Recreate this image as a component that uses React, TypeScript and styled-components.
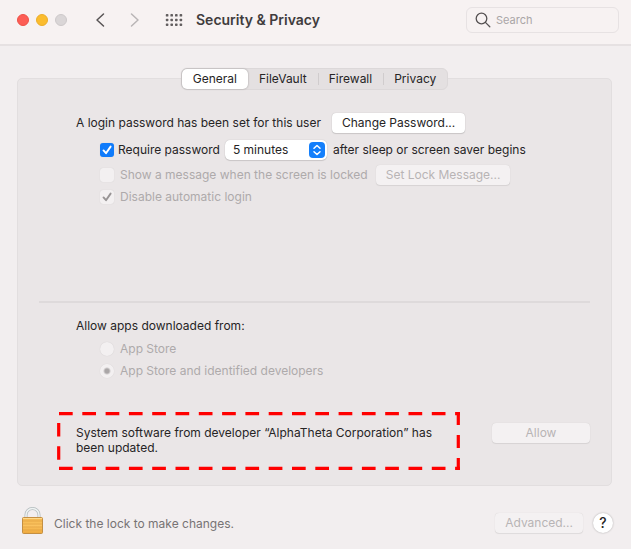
import React from "react";
import styled, { createGlobalStyle, css } from "styled-components";

const GlobalStyle = createGlobalStyle`
  * { box-sizing: border-box; }
  body {
    margin: 0;
    background: #f2eeef;
    color: #262425;
    font: 12px/16px Inter, "Liberation Sans", sans-serif;
  }
  button, input, select { font: inherit; color: inherit; margin: 0; }
`;

const Window = styled.div`
  display: flex;
  flex-direction: column;
  min-height: 100vh;
`;

const Toolbar = styled.header`
  display: flex;
  align-items: center;
  height: 46px;
  padding: 0 12px 4px 17px;
  background: #f7f2f2;
  border-bottom: 2px solid #e6e1e2;
`;

const Lights = styled.div`
  display: flex;
  gap: 7px;
`;

const Light = styled.button<{ $color: string; $edge: string }>`
  width: 12px;
  height: 12px;
  padding: 0;
  border: 1px solid ${(p) => p.$edge};
  border-radius: 50%;
  background: ${(p) => p.$color};
`;

const IconButton = styled.button<{ $gap: number }>`
  display: flex;
  margin-left: ${(p) => p.$gap}px;
  padding: 0;
  border: 0;
  background: none;
`;

const Title = styled.h1`
  flex: 1;
  margin: 0 0 0 13px;
  font-size: 14px;
  line-height: 16px;
  font-weight: 600;
  color: #403c3d;
  white-space: nowrap;
`;

const SearchBox = styled.label`
  display: flex;
  align-items: center;
  gap: 5px;
  width: 153px;
  height: 26px;
  padding: 0 8px;
  border: 1px solid #e7e2e3;
  border-radius: 6px;
`;

const SearchInput = styled.input`
  min-width: 0;
  flex: 1;
  padding: 0;
  border: 0;
  outline: 0;
  background: none;
  font-size: 11px;
  &::placeholder { color: #aaa6a7; opacity: 1; }
`;

const Main = styled.main`
  display: flex;
  flex-direction: column;
  padding: 22px 19px 0 17px;
`;

const Tabs = styled.div`
  z-index: 1;
  display: flex;
  align-self: center;
  height: 22px;
  margin-bottom: -12px;
  border: 1px solid #dcd8d9;
  border-radius: 6px;
  background: #e4e0e1;
`;

const Tab = styled.button<{ $active?: boolean; $divided?: boolean }>`
  position: relative;
  padding: 0 11px;
  border: 0;
  border-radius: 5px;
  background: none;
  ${(p) =>
    p.$active &&
    css`
      background: #fff;
      box-shadow: 0 0 2px rgba(0, 0, 0, 0.35);
    `}
  ${(p) =>
    p.$divided &&
    css`
      &::before {
        content: "";
        position: absolute;
        left: 0;
        top: 4px;
        width: 1px;
        height: 12px;
        background: #d0cccd;
      }
    `}
`;

const Panel = styled.section`
  display: flex;
  flex-direction: column;
  padding: 34px 21px 15px;
  border: 1px solid #e2dedf;
  border-radius: 5px;
  background: #eae6e7;
`;

const Group = styled.div<{ $space?: number }>`
  display: flex;
  flex-direction: column;
  margin-bottom: ${(p) => p.$space ?? 0}px;
  padding-left: 37px;
`;

const Row = styled.div<{ $indent?: boolean; $height: number }>`
  display: flex;
  align-items: center;
  height: ${(p) => p.$height}px;
  padding-left: ${(p) => (p.$indent ? 24 : 0)}px;
  white-space: nowrap;
`;

const PushButton = styled.button<{ $gap?: number; $width?: number }>`
  flex: none;
  width: ${(p) => (p.$width ? `${p.$width}px` : "auto")};
  height: 20px;
  margin-left: ${(p) => p.$gap ?? 0}px;
  padding: 0 10px;
  border: 0;
  border-radius: 4px;
  background: #fff;
  box-shadow: 0 0 1px rgba(0, 0, 0, 0.25), 0 1px 1px rgba(0, 0, 0, 0.12);
  white-space: nowrap;
  &:disabled {
    color: #b8b4b5;
    background: #f4f1f2;
    box-shadow: 0 0 1px rgba(0, 0, 0, 0.15), 0 1px 1px rgba(0, 0, 0, 0.07);
  }
`;

const Option = styled.label<{ $disabled?: boolean; $gap: number }>`
  display: flex;
  align-items: center;
  gap: ${(p) => p.$gap}px;
  color: ${(p) => (p.$disabled ? "#aeaaab" : "inherit")};
`;

const tick = (color: string) =>
  `url("data:image/svg+xml,%3Csvg xmlns='http://www.w3.org/2000/svg' viewBox='0 0 14 14'%3E%3Cpath d='M3.5 7.4 6 10.2 10.6 3.6' fill='none' stroke='%23${color}' stroke-width='1.9' stroke-linecap='round' stroke-linejoin='round'/%3E%3C/svg%3E")`;

const Check = styled.input.attrs({ type: "checkbox" })`
  appearance: none;
  width: 14px;
  height: 14px;
  border-radius: 3px;
  background: #f3f0f1;
  box-shadow: 0 0 1px rgba(0, 0, 0, 0.15);
  &:checked { background: ${tick("ffffff")} #0f7bfb; }
  &:disabled:checked { background: ${tick("989495")} #f3f0f1; }
`;

const Radio = styled.input.attrs({ type: "radio" })`
  appearance: none;
  width: 14px;
  height: 14px;
  border-radius: 50%;
  background: #f3f0f1;
  box-shadow: 0 0 1px rgba(0, 0, 0, 0.15);
  &:checked { background: radial-gradient(circle, #aaa6a7 2px, #f3f0f1 4px); }
`;

const SelectBox = styled.div`
  position: relative;
  width: 102px;
  height: 20px;
  margin: 0 6px 0 5px;
`;

const Select = styled.select`
  appearance: none;
  width: 100%;
  height: 100%;
  padding: 0 24px 0 8px;
  border: 0;
  border-radius: 5px;
  background: #fff;
  box-shadow: 0 0 1px rgba(0, 0, 0, 0.25), 0 1px 1px rgba(0, 0, 0, 0.12);
`;

const Stepper = styled.svg`
  position: absolute;
  top: 2px;
  right: 2px;
  pointer-events: none;
`;

const Divider = styled.hr`
  width: 100%;
  height: 2px;
  margin: 0 0 15px;
  border: 0;
  background: #dedadb;
`;

const NoticeRow = styled.div`
  display: flex;
  align-items: flex-start;
  justify-content: space-between;
  gap: 32px;
  padding-left: 18px;
`;

const Notice = styled.div`
  position: relative;
  flex: 1;
  max-width: 403px;
  padding: 13px 19px 15px;
  line-height: 15px;
`;

const NoticeText = styled.p`
  margin: 0;
`;

const Outline = styled.svg`
  position: absolute;
  inset: 0;
  width: 100%;
  height: 100%;
`;

const AllowArea = styled.div`
  padding-top: 11px;
`;

const Footer = styled.footer`
  display: flex;
  align-items: center;
  padding: 21px 18px 0 22px;
`;

const LockButton = styled.button`
  display: flex;
  align-items: center;
  gap: 11px;
  margin-right: auto;
  padding: 0;
  border: 0;
  background: none;
  color: #777374;
`;

const LockLabel = styled.span`
  padding-top: 6px;
`;

const Help = styled.button`
  width: 20px;
  height: 20px;
  margin-left: 10px;
  padding: 0;
  border: 0;
  border-radius: 50%;
  background: #fff;
  box-shadow: 0 0 2px rgba(0, 0, 0, 0.3);
  font-size: 14px;
  font-weight: 500;
`;

const FooterActions = styled.div`
  display: flex;
  padding-top: 4px;
`;

function Chevron({ right }: { right?: boolean }) {
  return (
    <svg width="10" height="16" viewBox="0 0 10 16" fill="none" stroke={right ? "#b9b5b6" : "#585455"} strokeWidth="1.5" strokeLinecap="round" strokeLinejoin="round">
      <path d={right ? "M1.5 2 8 8l-6.500 6" : "M8.500 2 2 8l6.500 6"} />
    </svg>
  );
}

function GridIcon() {
  return (
    <svg width="18" height="14" viewBox="0 0 18 14" fill="#625e5f">
      {[0, 1, 2].map((r) =>
        [0, 1, 2, 3].map((c) => <rect key={`${r}${c}`} x={0.8 + c * 4.6} y={1 + r * 4.7} width="2.6" height="2.6" rx="0.7" />)
      )}
    </svg>
  );
}

function LockIcon() {
  return (
    <svg width="21" height="27" viewBox="0 0 21 27">
      <defs>
        <linearGradient id="brass" x1="0" y1="0" x2="0" y2="1">
          <stop offset="0" stopColor="#f3b64d" />
          <stop offset="0.5" stopColor="#fbc360" />
          <stop offset="1" stopColor="#eea83c" />
        </linearGradient>
      </defs>
      <path d="M4 12V8a6.500 6.500 0 0 1 13 0V12" fill="none" stroke="#b4bbbd" strokeWidth="3" />
      <path d="M4 12V8a6.500 6.500 0 0 1 13 0V12" fill="none" stroke="#eef2f2" strokeWidth="1.500" />
      <rect x="0.500" y="10.500" width="20" height="16" rx="1" fill="url(#brass)" stroke="#c48f43" />
      <path d="M1 14h19M1 17h19M1 20h19M1 23h19" stroke="#dfa044" strokeWidth="0.700" />
      <path d="M1 11.500h19" stroke="#ffd98a" />
    </svg>
  );
}

function DashedOutline() {
  return (
    <Outline viewBox="0 0 403 58" preserveAspectRatio="none" fill="none" stroke="#ff0000" strokeWidth="3.200" aria-hidden="true">
      <path d="M2 1.700H403M2 56.300H403" strokeDasharray="13.700 9.600" />
      <path d="M1.700 11V50" strokeDasharray="13.500 9.800" />
      <path d="M401.300 0V58" strokeDasharray="13 10" />
    </Outline>
  );
}

export default function App() {
  return (
    <>
      <GlobalStyle />
      <Window>
        <Toolbar>
          <Lights>
            <Light aria-label="Close" $color="#fd5d55" $edge="#ee5148" />
            <Light aria-label="Minimize" $color="#fbbc2e" $edge="#ecae2a" />
            <Light aria-label="Zoom" $color="#dad6d7" $edge="#cdc9ca" />
          </Lights>
          <IconButton $gap={28} aria-label="Back"><Chevron /></IconButton>
          <IconButton $gap={25} aria-label="Forward"><Chevron right /></IconButton>
          <IconButton $gap={25} aria-label="Show all"><GridIcon /></IconButton>
          <Title>Security &amp; Privacy</Title>
          <SearchBox>
            <svg width="16" height="16" viewBox="0 0 16 16" fill="none" stroke="#555152" strokeWidth="1.300" strokeLinecap="round">
              <circle cx="6.500" cy="6.500" r="5.300" />
              <path d="m10.400 10.400 4.400 4.400" />
            </svg>
            <SearchInput type="search" placeholder="Search" aria-label="Search" />
          </SearchBox>
        </Toolbar>
        <Main>
          <Tabs role="tablist">
            <Tab role="tab" aria-selected="true" $active>General</Tab>
            <Tab role="tab">FileVault</Tab>
            <Tab role="tab" $divided>Firewall</Tab>
            <Tab role="tab" $divided>Privacy</Tab>
          </Tabs>
          <Panel>
            <Group $space={90}>
              <Row $height={20}>
                A login password has been set for this user
                <PushButton $gap={11}>Change Password...</PushButton>
              </Row>
              <Row $indent $height={34}>
                <Option $gap={4}>
                  <Check defaultChecked />
                  Require password
                </Option>
                <SelectBox>
                  <Select aria-label="Password delay" defaultValue="5 minutes">
                    <option>5 minutes</option>
                  </Select>
                  <Stepper width="16" height="16" viewBox="0 0 16 16" fill="none">
                    <rect width="16" height="16" rx="4" fill="#147ffb" />
                    <path d="M5 6.300 8 3.500l3 2.800M5 9.700l3 2.800 3-2.800" stroke="#fff" strokeWidth="1.500" strokeLinecap="round" strokeLinejoin="round" />
                  </Stepper>
                </SelectBox>
                after sleep or screen saver begins
              </Row>
              <Row $indent $height={16}>
                <Option $disabled $gap={6}>
                  <Check disabled />
                  Show a message when the screen is locked
                </Option>
                <PushButton disabled $gap={8}>Set Lock Message...</PushButton>
              </Row>
              <Row $indent $height={28}>
                <Option $disabled $gap={6}>
                  <Check disabled defaultChecked />
                  Disable automatic login
                </Option>
              </Row>
            </Group>
            <Divider />
            <Group $space={34} role="radiogroup" aria-labelledby="sources">
              <Row $height={16} id="sources">Allow apps downloaded from:</Row>
              <Row $indent $height={30}>
                <Option $disabled $gap={6}>
                  <Radio name="source" disabled />
                  App Store
                </Option>
              </Row>
              <Row $indent $height={14}>
                <Option $disabled $gap={6}>
                  <Radio name="source" disabled defaultChecked />
                  App Store and identified developers
                </Option>
              </Row>
            </Group>
            <NoticeRow>
              <Notice>
                <DashedOutline />
                <NoticeText>System software from developer “AlphaTheta Corporation” has been updated.</NoticeText>
              </Notice>
              <AllowArea>
                <PushButton disabled $width={98}>Allow</PushButton>
              </AllowArea>
            </NoticeRow>
          </Panel>
        </Main>
        <Footer>
          <LockButton>
            <LockIcon />
            <LockLabel>Click the lock to make changes.</LockLabel>
          </LockButton>
          <FooterActions>
            <PushButton disabled>Advanced...</PushButton>
            <Help aria-label="Help">?</Help>
          </FooterActions>
        </Footer>
      </Window>
    </>
  );
}
